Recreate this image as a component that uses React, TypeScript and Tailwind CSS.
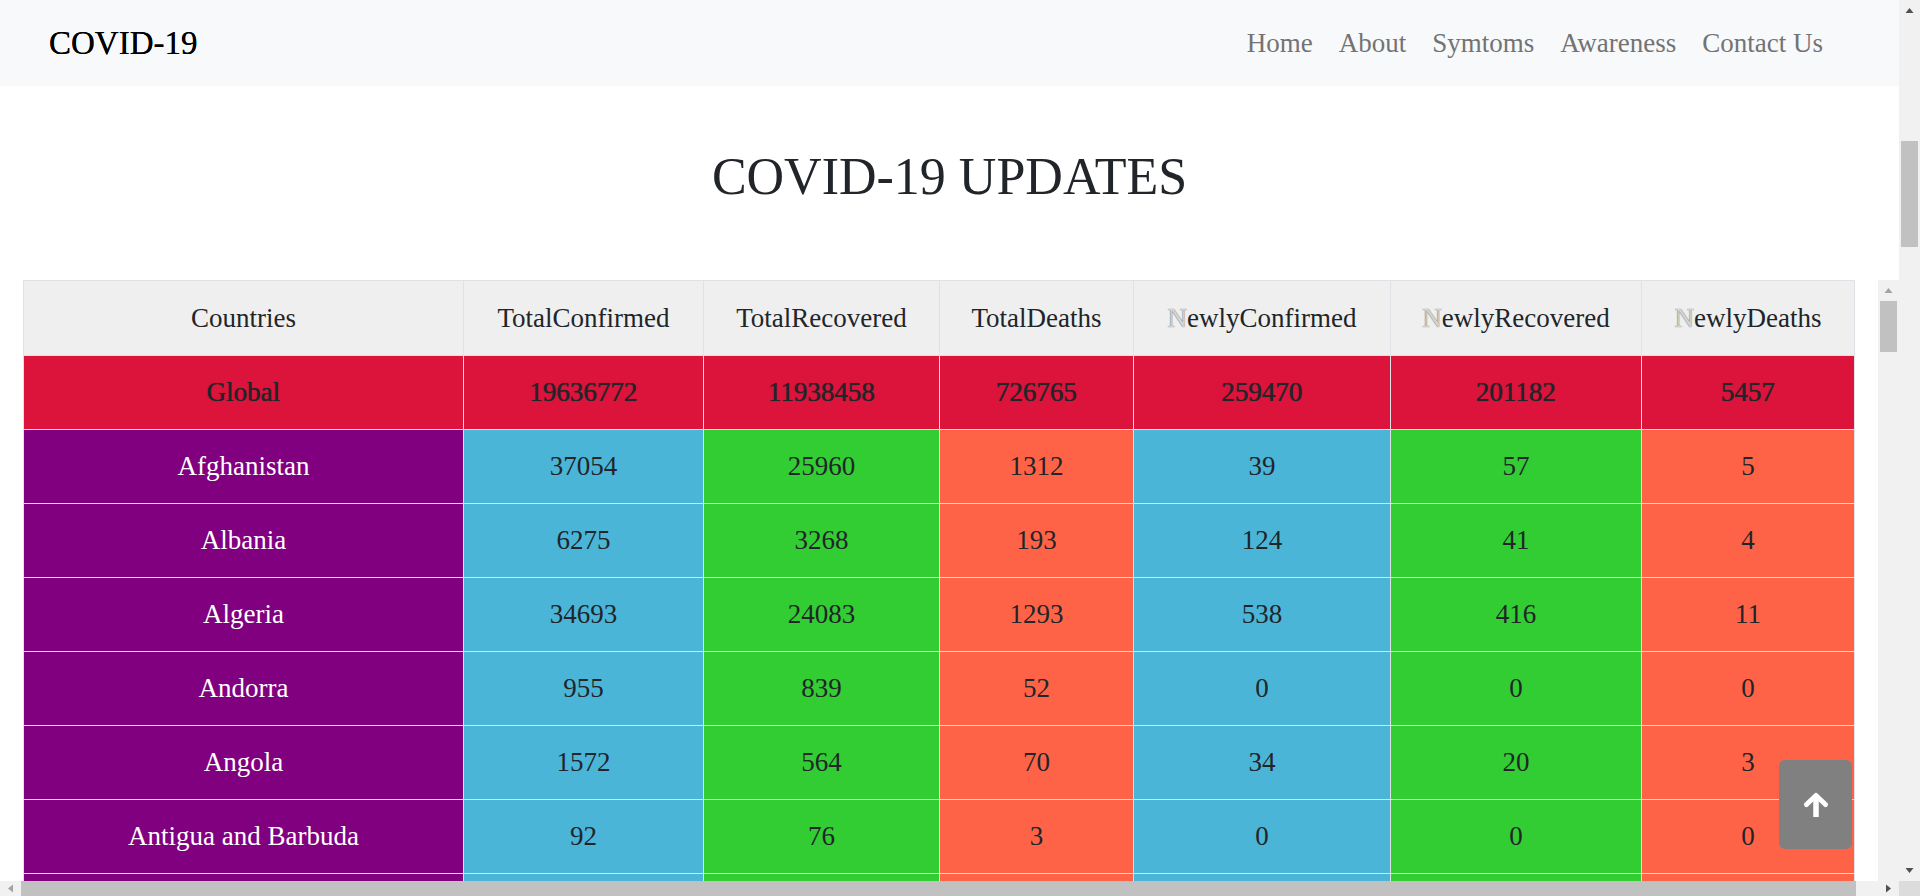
import React from 'react';

const rows = [
  ['Afghanistan', 37054, 25960, 1312, 39, 57, 5],
  ['Albania', 6275, 3268, 193, 124, 41, 4],
  ['Algeria', 34693, 24083, 1293, 538, 416, 11],
  ['Andorra', 955, 839, 52, 0, 0, 0],
  ['Angola', 1572, 564, 70, 34, 20, 3],
  ['Antigua and Barbuda', 92, 76, 3, 0, 0, 0],
];

const links = ['Home', 'About', 'Symtoms', 'Awareness', 'Contact Us'];

const cellColors = ['bg-[#4bb5d8]', 'bg-[#32cd32]', 'bg-[#ff6347]', 'bg-[#4bb5d8]', 'bg-[#32cd32]', 'bg-[#ff6347]'];

function Newly({ rest }: { rest: string }) {
  return (
    <>
      <span className="text-[#d4d4d4] [text-shadow:0_0_1px_#444]">N</span>
      {rest}
    </>
  );
}

function Arrow({ dir, color }: { dir: 'up' | 'down' | 'left' | 'right'; color: string }) {
  const pts = {
    up: '0,6 4,1 8,6',
    down: '0,1 4,6 8,1',
    left: '6,0 1,4 6,8',
    right: '1,0 6,4 1,8',
  }[dir];
  const vertical = dir === 'up' || dir === 'down';
  return (
    <svg width={vertical ? 9 : 7} height={vertical ? 7 : 9} viewBox={vertical ? '0 0 8 7' : '0 0 7 8'}>
      <polygon points={pts} fill={color} />
    </svg>
  );
}

export default function App() {
  return (
    <div className="relative flex w-[1920px] h-[896px] overflow-hidden bg-white font-['Liberation_Serif',serif] text-[#212529]">
      <div className="flex flex-col w-[1899px] min-w-0">
        <nav className="flex items-center justify-between h-[86px] bg-[#f8f9fa] pl-[49px] pr-[76px] shrink-0">
          <span className="text-[33px] text-black leading-none [text-shadow:0_0_0.5px_#000]">COVID-19</span>
          <ul className="flex gap-[26px] text-[27px] text-[#737373] leading-none">
            {links.map(l => <li key={l}>{l}</li>)}
          </ul>
        </nav>

        <div className="flex flex-col flex-1 min-h-0">
          <h1 className="text-center text-[52px] leading-[62px] mt-[60px] mb-[72px] shrink-0">COVID-19 UPDATES</h1>

          <div className="flex flex-1 min-h-0">
            <div className="w-[1878px] pl-[23px] overflow-hidden">
              <table className="table-fixed border-collapse w-[1831px] text-[27px] text-center">
                <colgroup>
                  <col className="w-[440px]" />
                  <col className="w-[240px]" />
                  <col className="w-[236px]" />
                  <col className="w-[194px]" />
                  <col className="w-[257px]" />
                  <col className="w-[251px]" />
                  <col className="w-[213px]" />
                </colgroup>
                <thead>
                  <tr className="h-[75px] bg-[#efefef]">
                    <th className="font-normal border border-[#dee2e6]">Countries</th>
                    <th className="font-normal border border-[#dee2e6]">TotalConfirmed</th>
                    <th className="font-normal border border-[#dee2e6]">TotalRecovered</th>
                    <th className="font-normal border border-[#dee2e6]">TotalDeaths</th>
                    <th className="font-normal border border-[#dee2e6]"><Newly rest="ewlyConfirmed" /></th>
                    <th className="font-normal border border-[#dee2e6]"><Newly rest="ewlyRecovered" /></th>
                    <th className="font-normal border border-[#dee2e6]"><Newly rest="ewlyDeaths" /></th>
                  </tr>
                </thead>
                <tbody>
                  <tr className="h-[74px] bg-[#dc143c] [text-shadow:0_0_0.7px_#212529]">
                    <td className="border border-[#dee2e6]">Global</td>
                    <td className="border border-[#dee2e6]">19636772</td>
                    <td className="border border-[#dee2e6]">11938458</td>
                    <td className="border border-[#dee2e6]">726765</td>
                    <td className="border border-[#dee2e6]">259470</td>
                    <td className="border border-[#dee2e6]">201182</td>
                    <td className="border border-[#dee2e6]">5457</td>
                  </tr>
                  {rows.map(r => (
                    <tr key={r[0]} className="h-[74px]">
                      <td className="border border-[#dee2e6] bg-[#800080] text-white">{r[0]}</td>
                      {r.slice(1).map((v, i) => (
                        <td key={i} className={`border border-[#dee2e6] ${cellColors[i]}`}>{v}</td>
                      ))}
                    </tr>
                  ))}
                  {/* next row, only its top edge is in view */}
                  <tr className="h-[74px]">
                    <td className="border border-[#dee2e6] bg-[#800080]" />
                    {cellColors.map((c, i) => (
                      <td key={i} className={`border border-[#dee2e6] ${c}`} />
                    ))}
                  </tr>
                </tbody>
              </table>
            </div>

            {/* table's own scrollbar */}
            <div className="w-[21px] bg-[#f1f1f1] flex flex-col items-center shrink-0">
              <div className="h-[21px] flex items-center justify-center"><Arrow dir="up" color="#a3a3a3" /></div>
              <div className="w-[17px] h-[51px] bg-[#c1c1c1]" />
            </div>
          </div>
        </div>

        {/* page horizontal scrollbar */}
        <div className="flex items-center h-[15px] bg-[#f1f1f1] shrink-0">
          <div className="w-[21px] flex justify-center"><Arrow dir="left" color="#a3a3a3" /></div>
          <div className="w-[1835px] h-[15px] bg-[#c1c1c1]" />
          <div className="flex-1 flex justify-end pr-[7px]"><Arrow dir="right" color="#505050" /></div>
        </div>
      </div>

      {/* page vertical scrollbar */}
      <div className="flex flex-col w-[21px] bg-[#f1f1f1] shrink-0">
        <div className="h-[21px] flex items-center justify-center"><Arrow dir="up" color="#505050" /></div>
        <div className="flex-1 flex flex-col items-center">
          <div className="w-[17px] h-[106px] mt-[120px] bg-[#c1c1c1]" />
        </div>
        <div className="h-[21px] flex items-center justify-center"><Arrow dir="down" color="#505050" /></div>
        <div className="h-[15px] bg-[#dcdcdc]" />
      </div>

      <button className="absolute left-[1779px] top-[760px] w-[73px] h-[89px] rounded-md bg-[#808080] flex items-center justify-center">
        <svg width="26" height="26" viewBox="0 0 26 26" fill="none">
          <polyline points="3.5,12.5 13,3.5 22.5,12.5" stroke="white" strokeWidth="5" strokeLinecap="round" strokeLinejoin="round" />
          <line x1="13" y1="5" x2="13" y2="25" stroke="white" strokeWidth="5.5" />
        </svg>
      </button>
    </div>
  );
}
